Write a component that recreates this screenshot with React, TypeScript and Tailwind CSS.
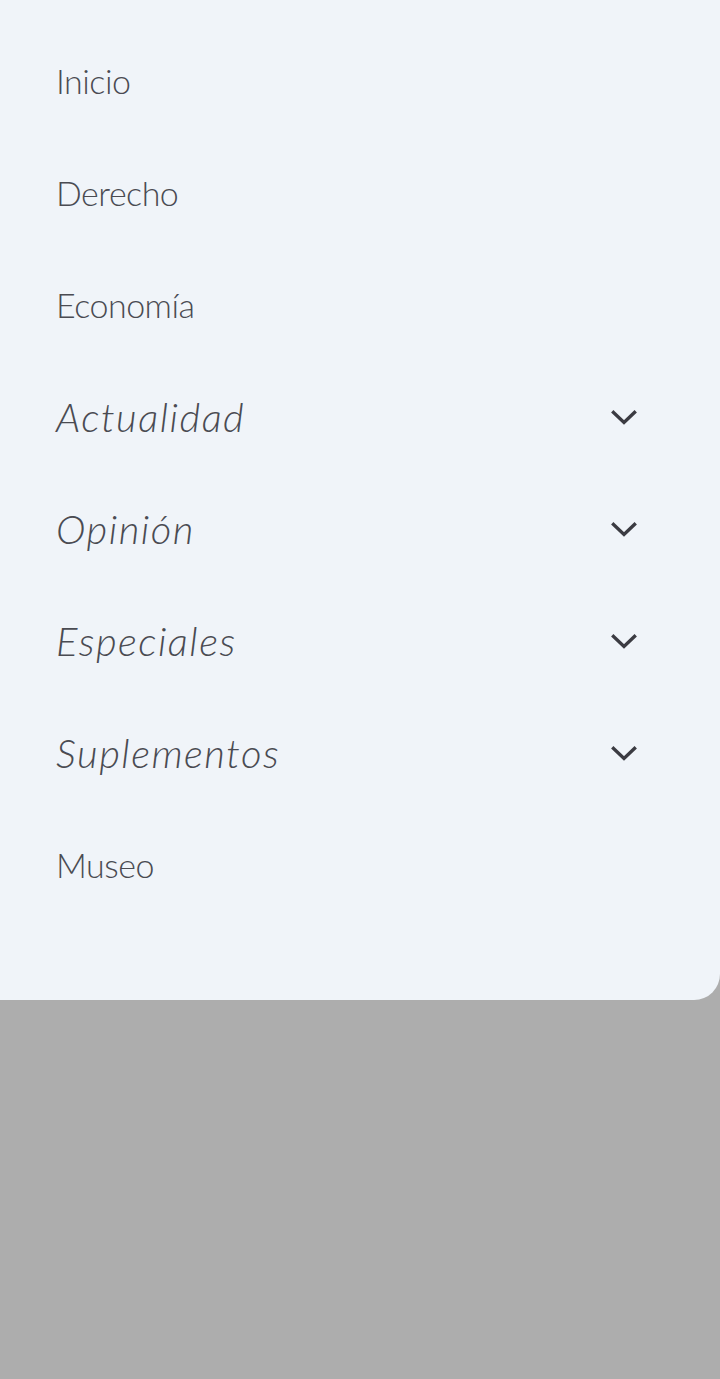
import React from "react";

const items: { label: string; italic?: boolean }[] = [
  { label: "Inicio" },
  { label: "Derecho" },
  { label: "Economía" },
  { label: "Actualidad", italic: true },
  { label: "Opinión", italic: true },
  { label: "Especiales", italic: true },
  { label: "Suplementos", italic: true },
  { label: "Museo" },
];

function Chevron() {
  return (
    <svg width="28" height="28" viewBox="0 0 28 28" fill="none" className="mt-[2px]">
      <path d="M3.5 8.5 L14 18.5 L24.5 8.5" stroke="#3b3b42" strokeWidth="3.4" strokeLinecap="square" strokeLinejoin="miter" />
    </svg>
  );
}

export default function App() {
  return (
    <div className="w-[720px] h-[1379px] bg-[#adadad] overflow-hidden" style={{ fontFamily: "Lato, 'Open Sans', sans-serif" }}>
      <nav className="h-[1000px] bg-[#f0f4f9] rounded-br-[26px] pt-[25px] flex flex-col">
        {items.map((it) => (
          <div key={it.label} className="h-[112px] flex items-center justify-between pl-[56px] pr-[82px]">
            {it.italic ? (
              <span className="text-[40px] italic font-light text-[#4a4b52] tracking-[1.5px]">{it.label}</span>
            ) : (
              <span className="text-[34px] font-light text-[#4a4b52] tracking-[-0.5px] -mt-[2px]">{it.label}</span>
            )}
            {it.italic && <Chevron />}
          </div>
        ))}
      </nav>
    </div>
  );
}
